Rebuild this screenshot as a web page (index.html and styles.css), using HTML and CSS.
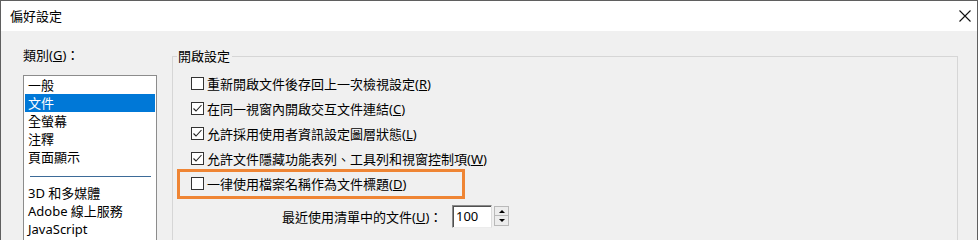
FILE: index.html
```html
<!DOCTYPE html>
<html lang="zh-Hant">
<head>
<meta charset="utf-8">
<title>偏好設定</title>
<link rel="stylesheet" href="styles.css">
</head>
<body>
<div class="window">
  <div class="titlebar">
    <span class="title">偏好設定</span>
    <svg class="close" width="12" height="12" viewBox="0 0 12 12"><path d="M0.5 0.5 L11.5 11.5 M11.5 0.5 L0.5 11.5" stroke="#111" stroke-width="1.1" fill="none"/></svg>
  </div>
  <div class="content">
    <div class="cat">
      <div class="cat-label">類別(<u>G</u>)：</div>
      <ul class="list">
        <li>一般</li>
        <li class="sel">文件</li>
        <li>全螢幕</li>
        <li>注釋</li>
        <li>頁面顯示</li>
        <li class="sep"></li>
        <li>3D 和多媒體</li>
        <li>Adobe 線上服務</li>
        <li>JavaScript</li>
      </ul>
    </div>
    <fieldset class="group">
      <legend>開啟設定</legend>
      <div class="row"><span class="cb"></span><span>重新開啟文件後存回上一次檢視設定(<u>R</u>)</span></div>
      <div class="row"><span class="cb on"><svg width="11" height="11" viewBox="0 0 11 11"><path d="M1.5 5.5 L4 8 L9.5 2" stroke="#222" stroke-width="1.1" fill="none"/></svg></span><span>在同一視窗內開啟交互文件連結(<u>C</u>)</span></div>
      <div class="row"><span class="cb on"><svg width="11" height="11" viewBox="0 0 11 11"><path d="M1.5 5.5 L4 8 L9.5 2" stroke="#222" stroke-width="1.1" fill="none"/></svg></span><span>允許採用使用者資訊設定圖層狀態(<u>L</u>)</span></div>
      <div class="row"><span class="cb on"><svg width="11" height="11" viewBox="0 0 11 11"><path d="M1.5 5.5 L4 8 L9.5 2" stroke="#222" stroke-width="1.1" fill="none"/></svg></span><span>允許文件隱藏功能表列、工具列和視窗控制項(<u>W</u>)</span></div>
      <div class="row hl"><span class="cb"></span><span>一律使用檔案名稱作為文件標題(<u>D</u>)</span></div>
      <div class="spin-row">
        <span class="spin-label">最近使用清單中的文件(<u>U</u>)：</span>
        <span class="num">100</span>
        <span class="spin"><span class="btn"><i class="up"></i></span><span class="btn"><i class="dn"></i></span></span>
      </div>
    </fieldset>
  </div>
</div>
</body>
</html>
```

FILE: styles.css
```css
html, body {
  margin: 0;
  padding: 0;
  background: #f0f0f0;
}
body {
  font-family: "Noto Sans", "Noto Sans CJK TC", sans-serif;
  font-size: 13px;
  color: #000;
}
u {
  text-decoration-thickness: 1px;
  text-underline-offset: 1px;
}
.window {
  width: 978px;
  height: 240px;
  box-sizing: border-box;
  border: 1px solid #5f5f5f;
  border-bottom: none;
  background: #f0f0f0;
  overflow: hidden;
}
.titlebar {
  height: 30px;
  background: #fff;
  display: flex;
  align-items: center;
  justify-content: space-between;
  padding: 0 6px 0 9px;
}
.title {
  line-height: 30px;
  margin-top: -1px;
}
.close {
  display: block;
  margin-top: -1px;
}
.content {
  display: flex;
  align-items: flex-start;
  padding: 15px 0 0 22px;
}
.cat {
  width: 134px;
  flex: none;
}
.cat-label {
  line-height: 18px;
  height: 18px;
  margin-bottom: 11px;
}
.list {
  list-style: none;
  margin: 0;
  padding: 0;
  height: 200px;
  border: 1px solid #8c8c8c;
  background: #fff;
}
.list li {
  height: 18px;
  line-height: 18px;
  margin: 0 1px;
  padding-left: 3px;
  white-space: nowrap;
}
.list li.sel {
  background: #0078d7;
  color: #fff;
}
.list li.sep {
  position: relative;
}
.list li.sep::before {
  content: "";
  position: absolute;
  left: 5px;
  right: 4px;
  top: 10px;
  border-top: 1px solid #3d6b98;
}
.group {
  flex: none;
  width: 786px;
  height: 240px;
  box-sizing: border-box;
  margin: 0 0 0 15px;
  padding: 5px 0 0 0;
  border: 1px solid #d6d6d6;
  min-inline-size: 0;
}
.group legend {
  margin-left: 4px;
  padding: 0 2px 0 1px;
  line-height: 20px;
}
.row {
  display: flex;
  align-items: center;
  height: 25px;
  padding-left: 18px;
  white-space: nowrap;
}
.row.hl {
  position: relative;
  width: fit-content;
}
.row.hl::after {
  content: "";
  position: absolute;
  left: 4px;
  right: -59px;
  top: -2px;
  height: 30px;
  box-sizing: border-box;
  border: 3px solid #ef8534;
}
.cb {
  width: 13px;
  height: 13px;
  box-sizing: border-box;
  border: 1px solid #333;
  background: #fff;
  margin-right: 3px;
  display: flex;
  align-items: center;
  justify-content: center;
  flex: none;
}
.cb svg {
  display: block;
}
.spin-row {
  display: flex;
  align-items: center;
  margin-top: 7px;
  padding-left: 109px;
  height: 26px;
  white-space: nowrap;
}
.spin-label {
  width: 170px;
}
.num {
  width: 40px;
  height: 23px;
  box-sizing: border-box;
  border: 1px solid;
  border-color: #8a8a8a #dcdcdc #ececec #8a8a8a;
  box-shadow: inset 1px 1px 0 #505050;
  background: #fff;
  padding-left: 3px;
  line-height: 20px;
}
.spin {
  display: flex;
  flex-direction: column;
  margin-left: 2px;
  width: 15px;
  height: 20px;
  gap: 0;
}
.spin .btn {
  height: 10px;
  box-sizing: border-box;
  border: 1px solid #b9b9b9;
  background: #ececec;
  display: flex;
  align-items: center;
  justify-content: center;
}
.spin .btn + .btn {
  border-top: none;
}
.up, .dn {
  display: block;
  width: 0;
  height: 0;
  border-left: 3px solid transparent;
  border-right: 3px solid transparent;
}
.up {
  border-bottom: 3px solid #000;
}
.dn {
  border-top: 3px solid #000;
}
```
